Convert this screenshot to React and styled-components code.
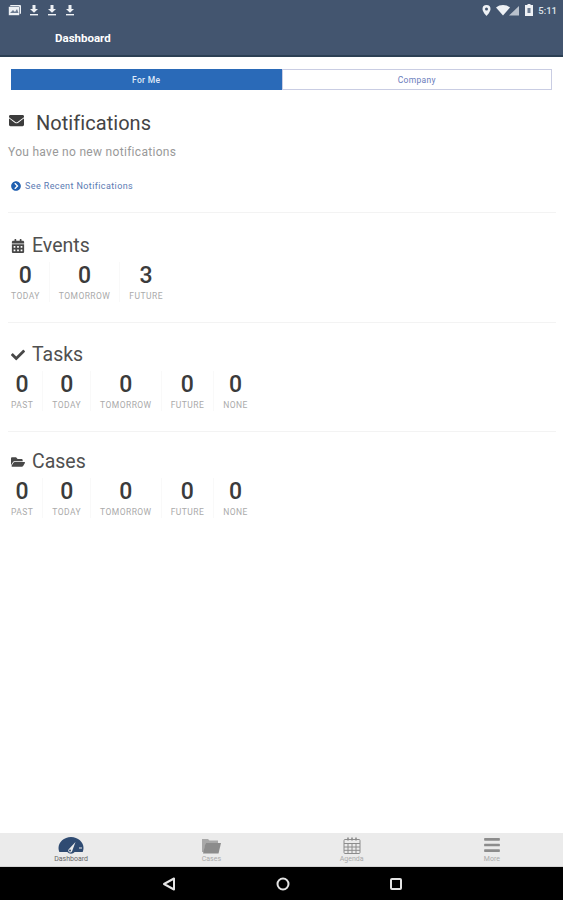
import React from 'react';
import styled, { createGlobalStyle } from 'styled-components';
import { FaEnvelope, FaCheck, FaFolderOpen, FaChevronCircleRight, FaCalendarAlt, FaBars } from 'react-icons/fa';

const GlobalStyle = createGlobalStyle`
  html, body { margin: 0; padding: 0; background: #fff; }
  body { font-family: Roboto, 'Liberation Sans', sans-serif; }
`;

const Page = styled.div`
  width: 563px;
  height: 900px;
  display: flex;
  flex-direction: column;
  overflow: hidden;
`;

const Header = styled.header`
  height: 55px;
  flex: none;
  background: #43556f;
  border-bottom: 2px solid #2c4054;
  display: flex;
  flex-direction: column;
`;

const StatusBar = styled.div`
  height: 20px;
  padding: 0 6px 0 8px;
  display: flex;
  align-items: center;
  justify-content: space-between;
  color: #eef1f5;
`;

const StatusGroup = styled.div`
  display: flex;
  align-items: center;
  gap: ${(p) => p.$gap || 8}px;
`;

const Clock = styled.span`
  font-size: 9.5px;
  font-weight: 500;
  color: #dfe4ea;
`;

const HeaderTitle = styled.div`
  padding: 11px 0 0 55px;
  color: #fff;
  font-size: 11.5px;
  line-height: 14px;
  font-weight: 700;
`;

const Content = styled.main`
  flex: 1;
  padding: 12px 7px 0 8px;
`;

const Tabs = styled.div`
  display: flex;
  height: 21px;
  margin: 0 4px 0 3px;
`;

const Tab = styled.div`
  flex: 1;
  display: flex;
  align-items: center;
  justify-content: center;
  font-size: 8.5px;
  letter-spacing: 0.3px;
  box-sizing: border-box;
  background: ${(p) => (p.$active ? '#2a6ab8' : '#fff')};
  color: ${(p) => (p.$active ? '#dfe9f8' : '#6a7cbc')};
  border: 1px solid ${(p) => (p.$active ? '#2a6ab8' : '#c9cde3')};
  font-weight: ${(p) => (p.$active ? 500 : 400)};
`;

const Notifications = styled.section`
  padding: 21px 0 20px;
  border-bottom: 1px solid #f3f3f3;
`;

const NotificationsTitle = styled.h2`
  margin: 0;
  display: flex;
  align-items: center;
  gap: 12px;
  padding-left: 1px;
  font-size: 20px;
  line-height: 24px;
  font-weight: 400;
  color: #444;
  letter-spacing: 0.05px;
  svg { font-size: 15px; color: #3c3c3c; margin-top: -5px; }
`;

const EmptyText = styled.p`
  margin: 10px 0 0;
  font-size: 12px;
  line-height: 15px;
  color: #999;
  letter-spacing: 0.3px;
`;

const RecentLink = styled.a`
  margin: 20px 0 0 3px;
  display: flex;
  align-items: center;
  gap: 4px;
  font-size: 9px;
  line-height: 12px;
  color: #5a7ab2;
  letter-spacing: 0.4px;
  svg { font-size: 10px; color: #1f5fb0; }
`;

const Summary = styled.section`
  padding: ${(p) => p.$top}px 0 ${(p) => p.$bottom}px;
  border-bottom: ${(p) => (p.$last ? 'none' : '1px solid #f3f3f3')};
`;

const SummaryTitle = styled.h3`
  margin: 0;
  display: flex;
  align-items: center;
  gap: 7px;
  padding-left: 3px;
  font-size: 19.5px;
  line-height: 22px;
  font-weight: 400;
  color: #505050;
  svg { font-size: 14px; width: 14px; color: #484848; }
`;

const Stats = styled.div`
  display: flex;
  margin-top: 5px;
`;

const Stat = styled.div`
  display: flex;
  flex-direction: column;
  align-items: center;
  padding: 0 9px 0 ${(p) => (p.$first ? 3 : 9)}px;
  border-right: ${(p) => (p.$end ? 'none' : '1px solid #f9f9f9')};
`;

const StatValue = styled.div`
  font-size: 23px;
  line-height: 27px;
  font-weight: 500;
  color: #3b3b3b;
`;

const StatLabel = styled.div`
  margin-top: 1px;
  font-size: 8.5px;
  line-height: 12px;
  letter-spacing: 0.45px;
  color: #aaa;
  white-space: nowrap;
`;

const BottomTabs = styled.nav`
  height: 33px;
  flex: none;
  background: #ebebeb;
  border-bottom: 1px solid #d4d4d4;
  display: grid;
  grid-template-columns: repeat(4, 1fr);
  padding: 0 1px;
`;

const BottomTab = styled.div`
  display: flex;
  flex-direction: column;
  align-items: center;
  justify-content: flex-end;
  color: ${(p) => (p.$active ? '#2f4b72' : '#8c8c8c')};
  svg { font-size: 18px; }
`;

const BottomLabel = styled.span`
  font-size: 7px;
  line-height: 9px;
  margin: 1px 0 2px;
  color: ${(p) => (p.$active ? '#666' : '#aaa')};
`;

const SystemNav = styled.div`
  height: 33px;
  flex: none;
  background: #000;
  display: flex;
  align-items: center;
  justify-content: center;
  gap: 100px;
`;

const StatBlock = ({ items }) => (
  <Stats>
    {items.map(([value, label], i) => (
      <Stat key={label} $first={i === 0} $end={i === items.length - 1}>
        <StatValue>{value}</StatValue>
        <StatLabel>{label}</StatLabel>
      </Stat>
    ))}
  </Stats>
);

const DownloadIcon = () => (
  <svg width="10" height="11" viewBox="0 0 10 11" fill="currentColor">
    <path d="M3.5 0h3v4H9L5 7.8 1 4h2.5z" />
    <rect x="1" y="9" width="8" height="1.4" />
  </svg>
);

const GalleryIcon = () => (
  <svg width="13" height="11" viewBox="0 0 13 11">
    <rect width="11" height="9" x="2" y="0" rx="1" fill="#eef1f5" />
    <rect width="11" height="9" x="0.5" y="1.5" rx="1" fill="#eef1f5" stroke="#43556f" strokeWidth="0.6" />
    <path d="M2 8l3-3 2 2 2-3 1.5 4z" fill="#6d7d93" />
  </svg>
);

const PinIcon = () => (
  <svg width="9" height="11" viewBox="0 0 9 11">
    <path d="M4.5 0A4 4 0 0 0 .5 4c0 3 4 7 4 7s4-4 4-7a4 4 0 0 0-4-4z" fill="#eef1f5" />
    <circle cx="4.5" cy="4" r="1.5" fill="#43556f" />
  </svg>
);

const WifiIcon = () => (
  <svg width="24" height="11" viewBox="0 0 24 11">
    <path d="M0 2.5C4-.8 10-.8 14 2.5L7 10.5z" fill="#eef1f5" />
    <path d="M23 1v9.5H13z" fill="#b9c1cc" />
  </svg>
);

const BatteryIcon = () => (
  <svg width="8" height="12" viewBox="0 0 8 12">
    <path d="M2.5 0h3v1H8v11H0V1h2.5z" fill="#eef1f5" />
    <rect x="2.5" y="4" width="3" height="5" fill="#6d7d93" />
  </svg>
);

const GaugeIcon = () => (
  <svg width="26" height="17" viewBox="0 0 26 17">
    <path d="M13 0C6 0 .5 5 .5 11c0 1.500.3 2.800.8 4h8a5 5 0 0 0 7.400 0h8c.5-1.200.8-2.500.8-4C25.500 5 20 0 13 0z" fill="#2f4b72" />
    <path d="M10.500 12.500l7-7.500-3.500 9.500a2 2 0 0 1-3.500-2z" fill="#ebebeb" />
    <circle cx="12" cy="13.500" r="1" fill="#2f4b72" />
    <path d="M21 11h3" stroke="#ebebeb" strokeWidth="1" />
  </svg>
);

const FolderIcon = () => (
  <svg width="19" height="16" viewBox="0 0 19 16">
    <path d="M0 1h6l1.500 1.500H16V5H3.500L2 14H0z" fill="#a8a8a8" />
    <path d="M3.500 5H19l-2.500 10.500H1z" fill="#8c8c8c" />
  </svg>
);

const GridCalendarIcon = () => (
  <svg width="18" height="17" viewBox="0 0 18 17" fill="none" stroke="#8c8c8c">
    <rect x="1" y="2.500" width="16" height="14" rx="1" />
    <path d="M1 6.500h16M1 10h16M1 13.300h16M5 6.500v10M9 6.500v10M13 6.500v10" />
    <path d="M5 .5v3M9 .5v3M13 .5v3" strokeWidth="1.6" />
  </svg>
);

const BackIcon = () => (
  <svg width="14" height="14" viewBox="0 0 14 14" fill="none" stroke="#e4e4e4" strokeWidth="2" strokeLinejoin="round">
    <path d="M12 1.500v11L2 7z" />
  </svg>
);

const HomeIcon = () => (
  <svg width="14" height="14" viewBox="0 0 14 14" fill="none" stroke="#e4e4e4" strokeWidth="2">
    <circle cx="7" cy="7" r="5.500" />
  </svg>
);

const RecentsIcon = () => (
  <svg width="12" height="12" viewBox="0 0 12 12" fill="none" stroke="#e4e4e4" strokeWidth="2">
    <rect x="1" y="1" width="10" height="10" rx="1" />
  </svg>
);

export default function App() {
  return (
    <Page>
      <GlobalStyle />
      <Header>
        <StatusBar>
          <StatusGroup>
            <GalleryIcon />
            <DownloadIcon />
            <DownloadIcon />
            <DownloadIcon />
          </StatusGroup>
          <StatusGroup $gap={5}>
            <PinIcon />
            <WifiIcon />
            <BatteryIcon />
            <Clock>5:11</Clock>
          </StatusGroup>
        </StatusBar>
        <HeaderTitle>Dashboard</HeaderTitle>
      </Header>

      <Content>
        <Tabs>
          <Tab $active>For Me</Tab>
          <Tab>Company</Tab>
        </Tabs>

        <Notifications>
          <NotificationsTitle>
            <FaEnvelope />
            Notifications
          </NotificationsTitle>
          <EmptyText>You have no new notifications</EmptyText>
          <RecentLink>
            <FaChevronCircleRight />
            See Recent Notifications
          </RecentLink>
        </Notifications>

        <Summary $top={22} $bottom={20}>
          <SummaryTitle>
            <FaCalendarAlt />
            Events
          </SummaryTitle>
          <StatBlock items={[['0', 'TODAY'], ['0', 'TOMORROW'], ['3', 'FUTURE']]} />
        </Summary>

        <Summary $top={21} $bottom={20}>
          <SummaryTitle>
            <FaCheck />
            Tasks
          </SummaryTitle>
          <StatBlock items={[['0', 'PAST'], ['0', 'TODAY'], ['0', 'TOMORROW'], ['0', 'FUTURE'], ['0', 'NONE']]} />
        </Summary>

        <Summary $top={19} $bottom={0} $last>
          <SummaryTitle>
            <FaFolderOpen />
            Cases
          </SummaryTitle>
          <StatBlock items={[['0', 'PAST'], ['0', 'TODAY'], ['0', 'TOMORROW'], ['0', 'FUTURE'], ['0', 'NONE']]} />
        </Summary>
      </Content>

      <BottomTabs>
        <BottomTab $active>
          <GaugeIcon />
          <BottomLabel $active>Dashboard</BottomLabel>
        </BottomTab>
        <BottomTab>
          <FolderIcon />
          <BottomLabel>Cases</BottomLabel>
        </BottomTab>
        <BottomTab>
          <GridCalendarIcon />
          <BottomLabel>Agenda</BottomLabel>
        </BottomTab>
        <BottomTab>
          <FaBars />
          <BottomLabel>More</BottomLabel>
        </BottomTab>
      </BottomTabs>

      <SystemNav>
        <BackIcon />
        <HomeIcon />
        <RecentsIcon />
      </SystemNav>
    </Page>
  );
}
